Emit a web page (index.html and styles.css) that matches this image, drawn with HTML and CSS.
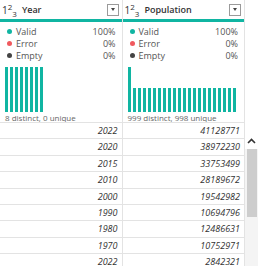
FILE: index.html
```html
<!DOCTYPE html>
<html lang="en">
<head>
  <meta charset="UTF-8">
  <title>Column profile</title>
  <link rel="stylesheet" href="styles.css">
</head>
<body>
  <div class="grid">
    <div class="top">
      <div class="col">
        <div class="head">
          <span class="type">1<sup>2</sup><sub>3</sub></span>
          <span class="name">Year</span>
          <span class="drop"><i></i></span>
        </div>
        <div class="profile">
          <div class="stat"><span class="dot valid"></span><span class="lbl">Valid</span><span class="pct">100%</span></div>
          <div class="stat"><span class="dot error"></span><span class="lbl">Error</span><span class="pct">0%</span></div>
          <div class="stat"><span class="dot empty"></span><span class="lbl">Empty</span><span class="pct">0%</span></div>
          <div class="hist" id="hist-year"></div>
          <div class="distinct">8 distinct, 0 unique</div>
        </div>
      </div>
      <div class="col">
        <div class="head">
          <span class="type">1<sup>2</sup><sub>3</sub></span>
          <span class="name">Population</span>
          <span class="drop"><i></i></span>
        </div>
        <div class="profile">
          <div class="stat"><span class="dot valid"></span><span class="lbl">Valid</span><span class="pct">100%</span></div>
          <div class="stat"><span class="dot error"></span><span class="lbl">Error</span><span class="pct">0%</span></div>
          <div class="stat"><span class="dot empty"></span><span class="lbl">Empty</span><span class="pct">0%</span></div>
          <div class="hist" id="hist-pop"></div>
          <div class="distinct">999 distinct, 998 unique</div>
        </div>
      </div>
    </div>
    <div class="bottom">
      <div class="rows" id="rows"></div>
      <div class="scroll">
        <div class="arrow">
          <svg width="9" height="6" viewBox="0 0 9 6"><path d="M1 5 L4.5 1.5 L8 5" fill="none" stroke="#333" stroke-width="1.6"/></svg>
        </div>
        <div class="thumb"></div>
      </div>
    </div>
  </div>

  <script>
    const data = [
      [2022, 41128771],
      [2020, 38972230],
      [2015, 33753499],
      [2010, 28189672],
      [2000, 19542982],
      [1990, 10694796],
      [1980, 12486631],
      [1970, 10752971],
      [2022, 2842321]
    ];

    const rows = document.getElementById("rows");
    data.forEach(([year, pop]) => {
      const r = document.createElement("div");
      r.className = "row";
      r.innerHTML = `<span class="cell">${year}</span><span class="cell">${pop}</span>`;
      rows.appendChild(r);
    });

    // Histograms
    function bars(id, heights) {
      const box = document.getElementById(id);
      heights.forEach(h => {
        const b = document.createElement("span");
        b.className = "bar";
        b.style.height = h + "px";
        box.appendChild(b);
      });
    }

    bars("hist-year", Array(8).fill(45));
    bars("hist-pop", [45].concat(Array(21).fill(24)));
  </script>
</body>
</html>
```

FILE: styles.css
```css
:root {
  --teal: #10b5a2;
  --line: #e3e3e3;
  --text: #333;
  --muted: #666;
}

body {
  margin: 0;
  background: #fff;
  font-family: 'Open Sans', 'Noto Sans', sans-serif;
  color: var(--text);
  width: 258px;
  height: 266px;
  overflow: hidden;
}

.top {
  display: flex;
  width: 245px;
}

.col {
  width: 122px;
  border-right: 1px solid var(--line);
}

.head {
  display: flex;
  align-items: center;
  height: 19px;
  padding: 0 3px 0 2px;
  border-bottom: 3px solid var(--teal);
  font-size: 9px;
}

.type {
  font-size: 10px;
  line-height: 1;
  margin-right: 5px;
}

.type sup,
.type sub {
  font-size: 8px;
  line-height: 0;
}

.name {
  font-weight: 600;
  flex: 1;
}

.drop {
  width: 10px;
  height: 10px;
  border: 1px solid #9a9a9a;
  display: flex;
  align-items: center;
  justify-content: center;
}

.drop i {
  border-left: 2.5px solid transparent;
  border-right: 2.5px solid transparent;
  border-top: 3px solid #444;
}

.profile {
  padding: 3px 5px 0 5px;
  height: 97px;
}

.stat {
  display: flex;
  align-items: center;
  height: 12px;
  font-size: 9px;
  color: #555;
}

.dot {
  width: 5px;
  height: 5px;
  border-radius: 50%;
  margin: 0 4px 0 2px;
}

.dot.valid { background: var(--teal); }
.dot.error { background: #f0595e; }
.dot.empty { background: #444; }

.lbl {
  flex: 1;
}

.pct {
  padding-right: 1px;
}

.hist {
  display: flex;
  align-items: flex-end;
  gap: 2px;
  height: 45px;
  margin-top: 6px;
}

.bar {
  width: 3px;
  background: var(--teal);
}

.distinct {
  font-size: 8px;
  color: var(--muted);
  line-height: 12px;
  white-space: nowrap;
}

.bottom {
  display: flex;
}

.rows {
  width: 245px;
}

.row {
  display: flex;
  height: 15.4px;
  border-top: 1px solid var(--line);
}

.cell {
  width: 118px;
  padding-right: 4px;
  border-right: 1px solid var(--line);
  text-align: right;
  font-style: italic;
  font-size: 9px;
  line-height: 16px;
}

.scroll {
  width: 13px;
  background: #f4f4f4;
  margin-top: 11px;
}

.arrow {
  height: 16px;
  display: flex;
  align-items: center;
  justify-content: center;
  background: #fff;
}

.thumb {
  width: 10px;
  height: 68px;
  margin: 0 auto;
  background: #cdcdcd;
}
```
